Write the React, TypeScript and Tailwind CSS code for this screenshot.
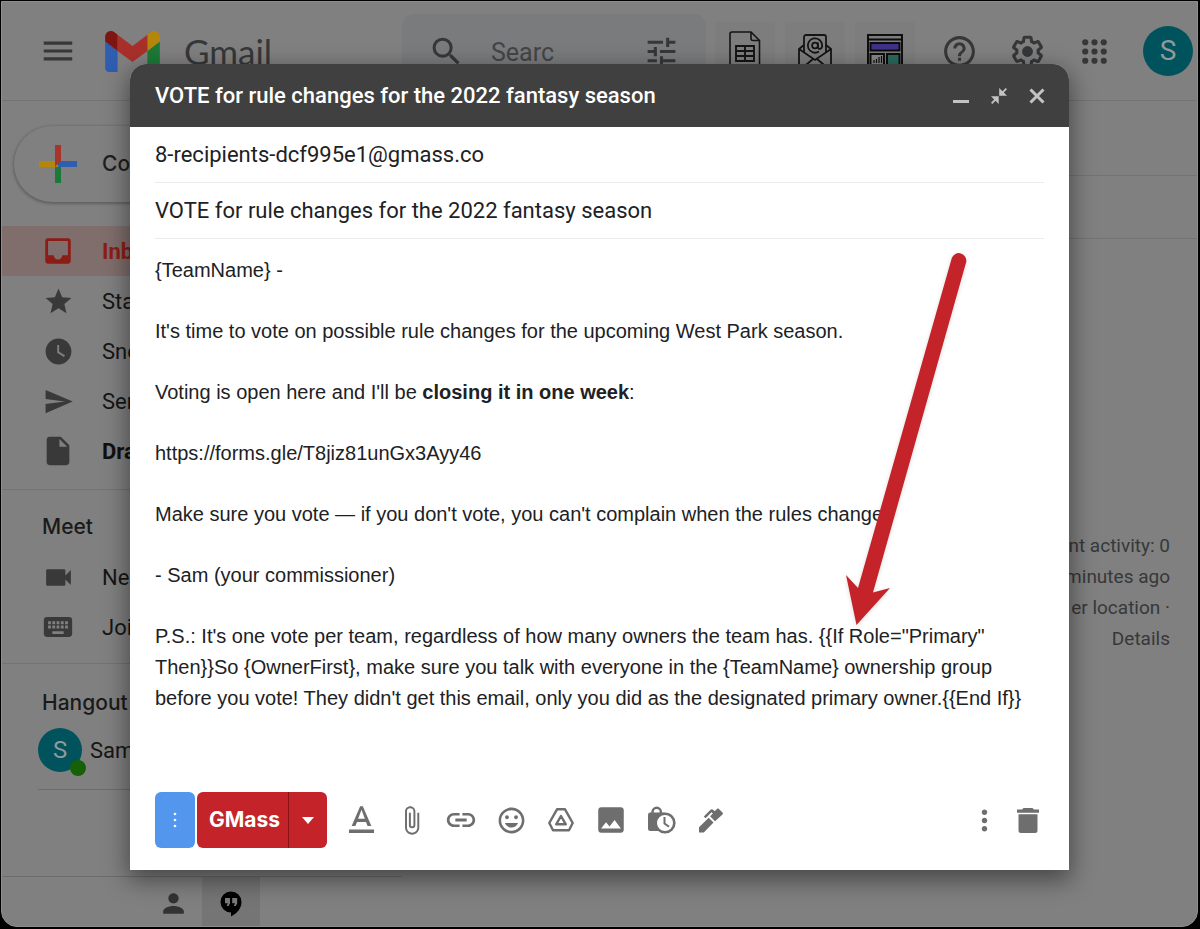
import type { ReactNode } from "react";
import {
  MdAttachFile,
  MdHelpOutline,
  MdImage,
  MdInbox,
  MdInsertDriveFile,
  MdKeyboard,
  MdLink,
  MdMenu,
  MdMood,
  MdMoreVert,
  MdPerson,
  MdSearch,
  MdSend,
  MdStar,
  MdTextFormat,
  MdTune,
  MdVideocam,
  MdWatchLater,
} from "react-icons/md";

function GmailLogo() {
  return (
    <svg viewBox="52 42 88 66" className="h-[41px] w-[55px]" aria-hidden="true">
      <path fill="#2f5db0" d="M58 108h14V74L52 59v43c0 3.32 2.69 6 6 6" />
      <path fill="#1c7a38" d="M120 108h14c3.32 0 6-2.69 6-6V59l-20 15" />
      <path fill="#b5860a" d="M120 48v26l20-15v-8c0-7.42-8.47-11.65-14.4-7.2" />
      <path fill="#a8302a" d="M72 74V48l24 18 24-18v26L96 92" />
      <path fill="#7d1512" d="M52 51v8l20 15V48l-5.6-4.2c-5.94-4.45-14.4-.22-14.4 7.2" />
    </svg>
  );
}

function SheetIcon() {
  return (
    <svg viewBox="0 0 32 42" className="h-[42px] w-8" fill="none" stroke="#141414" strokeWidth="1.6" aria-hidden="true">
      <path d="M3 1h19l8.500 8.500V39a2 2 0 0 1-2 2H3a2 2 0 0 1-2-2V3a2 2 0 0 1 2-2z" />
      <path d="M22 1v6.500a2 2 0 0 0 2 2h6.500" />
      <path d="M7 15h18v15H7zM7 20h18M7 25h18M16 15v15" strokeWidth="1.900" />
    </svg>
  );
}

function EnvelopeIcon() {
  return (
    <svg viewBox="0 0 36 38" className="h-[38px] w-9" fill="none" stroke="#141414" strokeWidth="1.800" aria-hidden="true">
      <path d="M7 18V3a2 2 0 0 1 2-2h18a2 2 0 0 1 2 2v15" />
      <path d="M7 11 2 15v20a2 2 0 0 0 2 2h28a2 2 0 0 0 2-2V15l-5-4" />
      <path d="m2 15 16 11 16-11M3 36l13-11M33 36 20 25" />
      <circle cx="18" cy="11.500" r="2.900" />
      <path d="M20.900 8.600v4.200c0 3.200 4.300 2.600 4.300-1.300a7.200 7.200 0 1 0-3.200 6" />
    </svg>
  );
}

function DashboardIcon() {
  return (
    <svg viewBox="0 0 36 36" className="h-9 w-9" stroke="#0a0a0a" strokeWidth="1.900" aria-hidden="true">
      <rect x="1" y="1" width="34" height="34" fill="#7c7c7c" />
      <path d="M1 5.500h34" />
      <rect x="3.500" y="9" width="29" height="7.500" fill="#42318a" />
      <rect x="3.500" y="20" width="13.500" height="13" fill="#858585" />
      <rect x="20" y="20" width="12.500" height="13" fill="#2b6a5c" />
      <path d="M7 29v-3M9.500 29v-4M12 29v-6M14.500 29v-7" strokeWidth="1.200" />
    </svg>
  );
}

function GearIcon() {
  return (
    <svg viewBox="0 0 24 24" className="size-[37px]" fill="currentColor" aria-hidden="true">
      <path d="M13.85 22.25h-3.7c-.74 0-1.36-.54-1.45-1.27l-.27-1.89c-.27-.14-.53-.29-.79-.46l-1.8.72c-.7.26-1.47-.03-1.81-.65L2.2 15.53c-.35-.66-.2-1.44.36-1.88l1.53-1.19c-.01-.15-.02-.3-.02-.46 0-.15.01-.31.02-.46l-1.52-1.19c-.59-.45-.74-1.26-.37-1.88l1.85-3.19c.34-.62 1.11-.9 1.79-.63l1.81.73c.26-.17.52-.32.78-.46l.27-1.91c.09-.7.71-1.25 1.44-1.25h3.7c.74 0 1.36.54 1.45 1.27l.27 1.89c.27.14.53.29.79.46l1.8-.72c.71-.26 1.48.03 1.82.65l1.84 3.18c.36.66.2 1.44-.36 1.88l-1.52 1.19c.01.15.02.3.02.46s-.01.31-.02.46l1.52 1.19c.56.45.72 1.23.37 1.86l-1.86 3.22c-.34.62-1.11.9-1.8.63l-1.8-.72c-.26.17-.52.32-.78.46l-.27 1.91c-.1.68-.72 1.22-1.46 1.22zm-3.23-2h2.76l.37-2.55.53-.22c.44-.18.88-.44 1.34-.78l.45-.34 2.38.96 1.38-2.4-2.03-1.58.07-.56c.03-.26.06-.51.06-.78s-.03-.53-.06-.78l-.07-.56 2.03-1.58-1.39-2.4-2.39.96-.45-.35c-.42-.32-.87-.58-1.33-.77l-.52-.22-.37-2.55h-2.76l-.37 2.55-.53.21c-.44.19-.88.44-1.34.79l-.45.33-2.38-.95-1.39 2.39 2.03 1.58-.07.56a7 7 0 0 0-.06.79c0 .26.02.53.06.78l.07.56-2.03 1.58 1.38 2.4 2.39-.96.45.35c.43.33.86.58 1.33.77l.53.22.38 2.55z" />
      <circle cx="12" cy="12" r="3.5" />
    </svg>
  );
}

function AppsIcon() {
  return (
    <svg viewBox="0 0 24 24" className="size-[37px]" fill="currentColor" aria-hidden="true">
      {[6, 12, 18].map((y) => [6, 12, 18].map((x) => <circle key={`${x}-${y}`} cx={x} cy={y} r="2" />))}
    </svg>
  );
}

function PlusIcon() {
  return (
    <svg viewBox="0 0 38 38" className="size-[38px]" aria-hidden="true">
      <path fill="#b5860a" d="M0 16h19v6H0z" />
      <path fill="#2f5db0" d="M19 16h19v6H19z" />
      <path fill="#1c7a38" d="M16 22h6v16h-6z" />
      <path fill="#a8342c" d="M16 0h6v16l-6 6z" />
    </svg>
  );
}

function HangoutsIcon() {
  return (
    <svg viewBox="0 0 22 26" className="h-[26px] w-[22px]" aria-hidden="true">
      <path fill="#000" d="M11 .5a10.500 10.500 0 0 0 0 21V25.500c5.500-2.700 10.500-8 10.500-14.500A10.500 10.500 0 0 0 11 .5z" />
      <path fill="#7a7a7a" d="M5 7h5v5.500L8.500 15H6.600l1.200-2.800H5zM12.200 7h5v5.500L15.700 15h-1.900l1.200-2.800h-2.800z" />
    </svg>
  );
}

function DriveIcon() {
  return (
    <svg viewBox="0 0 26 24" className="h-6 w-[26px]" fill="none" stroke="currentColor" strokeWidth="2.400" strokeLinejoin="round" aria-hidden="true">
      <path d="M9 1.300h8l7.700 13.700-3.700 7.200H5L1.300 15z" />
      <path d="M13 8 17.800 16.300H8.200z" />
    </svg>
  );
}

function LockClockIcon() {
  return (
    <svg viewBox="0 0 29 28" className="h-7 w-[29px]" aria-hidden="true">
      <path d="M5.500 9V6a4.200 4.200 0 0 1 8.400 0v3" fill="none" stroke="currentColor" strokeWidth="2.400" />
      <rect x="1" y="6.500" width="18" height="18.500" rx="2.200" fill="currentColor" />
      <circle cx="18" cy="17" r="9.300" fill="#fff" stroke="currentColor" strokeWidth="2.600" />
      <path d="M17.500 11v6.500l4.500 3.200" fill="none" stroke="currentColor" strokeWidth="2" />
    </svg>
  );
}

function PenIcon() {
  return (
    <svg viewBox="0 0 24 25" className="h-[25px] w-6" fill="currentColor" aria-hidden="true">
      <path d="M0 19.200 9.700 9.800l4.800 4.800L4.800 24.500H0z" />
      <path d="m16 13.200-4.900-4.900 2.800-2.800-1.400-1.200-6 6-1.700-1.700L11.600 1.800c.8-.8 1.700-.8 2.500 0l1.500 1.500L18 1c.5-.6 1.300-.6 1.900 0l3.600 3.600c.6.6.6 1.300 0 1.900z" />
    </svg>
  );
}

function TrashIcon() {
  return (
    <svg viewBox="0 0 22 25" className="h-[25px] w-[22px]" fill="currentColor" aria-hidden="true">
      <path d="M0 1.500h5L6.500 0h9L17 1.500h5v3.300H0zM1.500 6.300h19V22.500a2.500 2.500 0 0 1-2.500 2.500H4a2.500 2.500 0 0 1-2.500-2.500z" />
    </svg>
  );
}

function SmallDotsIcon() {
  return (
    <svg viewBox="0 0 4 16" className="h-4 w-1" fill="currentColor" aria-hidden="true">
      <circle cx="2" cy="2" r="1.300" />
      <circle cx="2" cy="8" r="1.300" />
      <circle cx="2" cy="14" r="1.300" />
    </svg>
  );
}

function ExitFullScreenIcon() {
  return (
    <svg viewBox="0 0 16 16" className="size-4" fill="currentColor" aria-hidden="true">
      <path d="M8.200 0v7.700H16l-3.200-3.200L16 1.300 14.700 0l-3.200 3.200zM0 8.300h7.700V16l-3.200-3.200L1.300 16 0 14.700l3.200-3.200z" />
    </svg>
  );
}

function CloseIcon() {
  return (
    <svg viewBox="0 0 16 16" className="size-4" fill="none" stroke="currentColor" strokeWidth="3" aria-hidden="true">
      <path d="m1.500 1.500 13 13M14.500 1.500l-13 13" />
    </svg>
  );
}

function IconButton({ label, className = "", children }: { label: string; className?: string; children: ReactNode }) {
  return (
    <button type="button" aria-label={label} className={`flex shrink-0 items-center justify-center ${className}`}>
      {children}
    </button>
  );
}

function TopBar() {
  return (
    <header className="flex h-[99px] items-center border-b border-[#737373] pr-1 text-[#363738]">
      <div className="flex w-[400px] shrink-0 items-center pl-[37px]">
        <IconButton label="Main menu">
          <MdMenu size={38} />
        </IconButton>
        <a href="#inbox" className="ml-7 flex items-center gap-6">
          <GmailLogo />
          <span className="font-['Lato',sans-serif] text-[35px] leading-10">Gmail</span>
        </a>
      </div>
      <label className="flex h-[74px] min-w-0 flex-1 items-center rounded-xl bg-[#797b7d] px-[26px]">
        <MdSearch size={37} className="shrink-0" />
        <input
          aria-label="Search mail"
          placeholder="Searc"
          className="ml-[26px] w-full min-w-0 flex-1 bg-transparent pt-1 text-[25px] outline-none placeholder:text-[#434546]"
        />
        <MdTune size={37} className="shrink-0" />
      </label>
      <div className="ml-[9px] flex shrink-0 gap-2.5">
        <IconButton label="Connect to a spreadsheet" className="h-[58px] w-[60px] bg-[#7d7d7d] pt-0.5">
          <SheetIcon />
        </IconButton>
        <IconButton label="Build email list" className="h-[58px] w-[60px] bg-[#7d7d7d] pt-1">
          <EnvelopeIcon />
        </IconButton>
        <IconButton label="Campaign dashboard" className="h-[58px] w-[60px] bg-[#7d7d7d] pt-0.5">
          <DashboardIcon />
        </IconButton>
      </div>
      <div className="ml-2.5 flex shrink-0">
        <IconButton label="Support" className="w-[68px]">
          <MdHelpOutline size={37} />
        </IconButton>
        <IconButton label="Settings" className="w-[68px]">
          <GearIcon />
        </IconButton>
        <IconButton label="Google apps" className="w-[66px]">
          <AppsIcon />
        </IconButton>
      </div>
      <IconButton label="Account" className="ml-4 size-[50px] rounded-full bg-[#00525c]">
        <span className="text-[28px] text-[#8f9a9b]">S</span>
      </IconButton>
    </header>
  );
}

// short labels: the rest of each name sits behind the compose window
const folders = [
  { name: "Inbox", short: "Inb", icon: <MdInbox size={34} />, className: "bg-[#7f6e6c] font-bold text-[#8c1d16]" },
  { name: "Starred", short: "Sta", icon: <MdStar size={31} />, className: "text-[#151515]" },
  { name: "Snoozed", short: "Sno", icon: <MdWatchLater size={31} />, className: "text-[#151515]" },
  { name: "Sent", short: "Sen", icon: <MdSend size={31} />, className: "text-[#151515]" },
  { name: "Drafts", short: "Dra", icon: <MdInsertDriveFile size={34} />, className: "font-bold text-[#101010]" },
];

const meetings = [
  { name: "New meeting", short: "Ne", icon: <MdVideocam size={33} /> },
  { name: "Join a meeting", short: "Joi", icon: <MdKeyboard size={34} /> },
];

function Sidebar() {
  return (
    <aside className="flex w-[400px] shrink-0 flex-col text-[22px]">
      <button
        type="button"
        aria-label="Compose"
        className="mt-[25px] ml-3 flex h-[76px] w-[220px] items-center gap-[25px] rounded-full bg-[#808080] pl-[25px] font-['Inter',sans-serif] text-[21px] font-medium text-[#1e1f20] shadow-[0_1px_3px_1px_rgba(0,0,0,0.25)]"
      >
        <PlusIcon />
        Co
      </button>
      <nav aria-label="Folders" className="mt-6">
        {folders.map((folder) => (
          <a
            key={folder.name}
            href="#folder"
            aria-label={folder.name}
            className={`flex h-[50px] items-center gap-[25px] pl-[37px] ${folder.className}`}
          >
            <span className={`flex w-[38px] justify-center ${folder.name === "Inbox" ? "" : "text-[#393939]"}`}>{folder.icon}</span>
            {folder.short}
          </a>
        ))}
      </nav>
      <section className="mt-[13px] border-t border-[#737373] pt-3 pb-[11px]">
        <h2 className="pl-10 font-['Inter',sans-serif] text-[21px] leading-[50px] font-medium text-[#1a1a1a]">Meet</h2>
        {meetings.map((item) => (
          <a
            key={item.name}
            href="#meet"
            aria-label={item.name}
            className="flex h-[50px] items-center gap-[25px] pl-[37px] text-[#151515]"
          >
            <span className="flex w-[38px] justify-center text-[#393939]">{item.icon}</span>
            {item.short}
          </a>
        ))}
      </section>
      <section className="border-t border-[#737373] pt-3.5">
        <h2 className="pl-10 font-['Inter',sans-serif] text-[21px] leading-[50px] font-medium text-[#1a1a1a]">Hangout</h2>
        <div className="ml-9 flex h-[62px] items-start gap-2 border-b border-[#6c6c6c]">
          <div className="relative flex size-11 items-center justify-center rounded-full bg-[#00525c] text-2xl text-[#8f9a9b]">
            S
            <span className="absolute -right-1 -bottom-1 size-4 rounded-full bg-[#166005]" />
          </div>
          <span className="leading-[46px] text-[#151515]">Sam</span>
        </div>
      </section>
      <div className="mt-auto flex h-[50px] border-t border-[#6c6c6c] pl-[142px]">
        <IconButton label="Contacts" className="w-[58px] pt-1 text-[#333333]">
          <MdPerson size={31} />
        </IconButton>
        <IconButton label="Hangouts" className="w-[58px] bg-[#757575] pt-1">
          <HangoutsIcon />
        </IconButton>
      </div>
    </aside>
  );
}

function MailPane() {
  return (
    <main className="flex min-w-0 flex-1 flex-col">
      <div className="h-[75px] border-b border-[#737373]" />
      <div className="h-[63px] border-b border-[#737373]" />
      <div className="mt-[291px] pr-[27px] text-right text-[19px] leading-[31px] text-[#373839]">
        <p>nt activity: 0</p>
        <p>minutes ago</p>
        <p>er location ·</p>
        <a href="#details">Details</a>
      </div>
    </main>
  );
}

function PointerArrow() {
  return (
    <svg
      viewBox="0 0 140 390"
      className="pointer-events-none absolute top-[180px] left-[710px] h-[390px] w-[140px] drop-shadow-sm"
      aria-hidden="true"
    >
      <path fill="#c42329" d="M6 331 18 344 111.800 14A7.500 7.500 0 0 1 126.200 18L33 348.500 50 344 16.500 381z" />
    </svg>
  );
}

function ComposeDialog() {
  return (
    <div
      role="dialog"
      aria-label="Compose message"
      className="relative flex flex-1 flex-col rounded-t-2xl bg-white shadow-[0_8px_24px_2px_rgba(0,0,0,0.45)]"
    >
      <div className="flex h-[63px] items-center justify-between rounded-t-2xl bg-[#404040] pr-[23px] pl-[25px]">
        <h1 className="text-[22px] font-medium text-white">VOTE for rule changes for the 2022 fantasy season</h1>
        <div className="flex gap-5 text-[#c3c3c3]">
          <IconButton label="Minimize" className="h-6 w-[18px] pt-3">
            <span className="h-[3px] w-4 bg-current" />
          </IconButton>
          <IconButton label="Exit full screen" className="h-6 w-[18px]">
            <ExitFullScreenIcon />
          </IconButton>
          <IconButton label="Save and close" className="h-6 w-[18px]">
            <CloseIcon />
          </IconButton>
        </div>
      </div>
      <form className="flex flex-1 flex-col px-[25px] pb-[22px] text-[#202124]">
        <input
          aria-label="To"
          defaultValue="8-recipients-dcf995e1@gmass.co"
          className="h-14 border-b border-[#ebebeb] text-[22px] outline-none"
        />
        <input
          aria-label="Subject"
          defaultValue="VOTE for rule changes for the 2022 fantasy season"
          className="h-14 border-b border-[#ebebeb] text-[22px] outline-none"
        />
        <div
          role="textbox"
          aria-label="Message body"
          aria-multiline="true"
          className="flex flex-1 flex-col gap-[30px] pt-4 font-['Liberation_Sans',Arial,sans-serif] text-[20px] leading-[31px]"
        >
          <p>{"{TeamName} -"}</p>
          <p>It's time to vote on possible rule changes for the upcoming West Park season.</p>
          <p>
            Voting is open here and I'll be <b>closing it in one week</b>:
          </p>
          <p>https://forms.gle/T8jiz81unGx3Ayy46</p>
          <p>Make sure you vote — if you don't vote, you can't complain when the rules change.</p>
          <p>- Sam (your commissioner)</p>
          <p>
            {"P.S.: It's one vote per team, regardless of how many owners the team has. {{If Role=\"Primary\" Then}}So {OwnerFirst}, make sure you talk with everyone in the {TeamName} ownership group before you vote! They didn't get this email, only you did as the designated primary owner.{{End If}}"}
          </p>
        </div>
        <div className="flex h-14 items-center text-[#6e6e6e]">
          <IconButton label="Campaign options" className="h-14 w-10 rounded-md bg-[#5396ee] text-white">
            <SmallDotsIcon />
          </IconButton>
          <div className="ml-0.5 flex h-14 w-[130px] overflow-hidden rounded-md bg-[#c42329] text-white">
            <button type="button" className="flex-1 border-r border-[#8a1216] pl-1 font-['Inter',sans-serif] text-[21px] font-bold">
              GMass
            </button>
            <IconButton label="GMass settings" className="w-[38px]">
              <svg viewBox="0 0 12 7" className="h-[7px] w-3" fill="currentColor" aria-hidden="true">
                <path d="M0 0h12L6 7z" />
              </svg>
            </IconButton>
          </div>
          <div className="ml-[9px] flex">
            <IconButton label="Formatting options" className="w-[50px]">
              <MdTextFormat size={43} />
            </IconButton>
            <IconButton label="Attach files" className="w-[50px]">
              <MdAttachFile size={31} />
            </IconButton>
            <IconButton label="Insert link" className="w-[50px]">
              <MdLink size={34} />
            </IconButton>
            <IconButton label="Insert emoji" className="w-[50px]">
              <MdMood size={31} />
            </IconButton>
            <IconButton label="Insert files using Drive" className="w-[50px]">
              <DriveIcon />
            </IconButton>
            <IconButton label="Insert photo" className="w-[50px]">
              <MdImage size={34} />
            </IconButton>
            <IconButton label="Confidential mode" className="w-[50px]">
              <LockClockIcon />
            </IconButton>
            <IconButton label="Insert signature" className="w-[50px]">
              <PenIcon />
            </IconButton>
          </div>
          <div className="ml-auto flex items-center gap-[11px] pr-[5px]">
            <IconButton label="More options" className="w-[44px]">
              <MdMoreVert size={33} />
            </IconButton>
            <IconButton label="Discard draft">
              <TrashIcon />
            </IconButton>
          </div>
        </div>
      </form>
      <PointerArrow />
    </div>
  );
}

export default function App() {
  return (
    <div className="flex min-h-screen bg-black pt-px pr-0.5 pb-0.5 pl-px font-['Roboto',sans-serif]">
      <div className="grid flex-1 overflow-hidden rounded-b-2xl border border-[#8f8f8f] bg-[#808080]">
        <div className="col-start-1 row-start-1 flex flex-col">
          <TopBar />
          <div className="flex flex-1">
            <Sidebar />
            <MailPane />
          </div>
        </div>
        <div className="col-start-1 row-start-1 flex pt-[62px] pr-32 pb-14 pl-32">
          <ComposeDialog />
        </div>
      </div>
    </div>
  );
}
